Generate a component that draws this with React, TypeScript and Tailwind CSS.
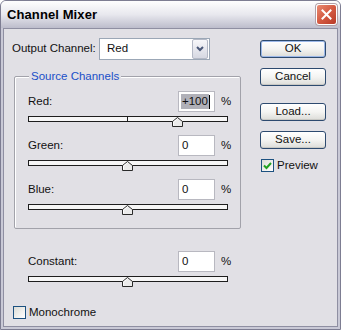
import React from "react";

const font = { fontFamily: '"Liberation Sans", Arial, sans-serif' };

function Thumb({ left }: { left: number }) {
  return (
    <svg
      className="absolute"
      style={{ left: left - 5, top: 0 }}
      width="11"
      height="10"
      viewBox="0 0 11 10"
    >
      <path d="M0.5 9.5 L0.5 4.5 L5.5 0.5 L10.5 4.5 L10.5 9.5 Z" fill="#ebebeb" stroke="#2a2a2a" strokeWidth="1" />
      <path d="M1.5 8.5 L1.5 5 L5.5 1.8" fill="none" stroke="#ffffff" strokeWidth="1" />
    </svg>
  );
}

function Slider({ pos, tick }: { pos: number; tick?: boolean }) {
  return (
    <div className="relative w-[200px] h-[10px]">
      <div className="absolute left-0 top-0 w-[200px] h-[6px] border border-[#1e1e1e] bg-[#f6f6f6]">
        {tick && <div className="absolute left-[98px] top-0 w-px h-[4px] bg-[#1e1e1e]" />}
      </div>
      <div className="absolute left-0 top-[1px] w-[200px] h-[10px]">
        <Thumb left={pos} />
      </div>
    </div>
  );
}

function ValueRow({
  label,
  value,
  pos,
  selected,
  tick,
}: {
  label: string;
  value: string;
  pos: number;
  selected?: boolean;
  tick?: boolean;
}) {
  return (
    <div className="flex flex-col">
      <div className="flex items-center h-[21px]">
        <div className="w-[163px] pl-[13px] text-[11.5px] text-[#111]">{label}</div>
        <div className="w-[37px] h-[21px] bg-white border border-[#b8b8c0] flex items-center pl-[2px] text-[11.5px] text-[#111]">
          {selected ? (
            <>
              <span className="bg-[#b0b0b8] px-[1px] leading-[15px]">{value}</span>
              <span className="w-px h-[14px] bg-black" />
            </>
          ) : (
            <span className="pl-[1px]">{value}</span>
          )}
        </div>
        <div className="pl-[6px] text-[11.5px] text-[#111]">%</div>
      </div>
      <div className="mt-[4px] pl-[13px]">
        <Slider pos={pos} tick={tick} />
      </div>
    </div>
  );
}

function XPButton({ label, def }: { label: string; def?: boolean }) {
  return (
    <div
      className={
        "w-[66px] h-[18px] rounded-[3px] border border-[#2d4a6f] flex items-center justify-center text-[11.5px] text-[#111] bg-gradient-to-b from-[#ffffff] via-[#f4f4f2] to-[#dcdcd8] " +
        (def ? "shadow-[inset_0_0_0_1px_#9cb8e8]" : "shadow-[inset_0_-1px_0_#c8c8c4]")
      }
    >
      {label}
    </div>
  );
}

export default function App() {
  return (
    <div className="w-[341px] h-[330px] bg-white" style={font}>
      <div className="w-[341px] h-[330px] rounded-t-[6px] border border-[#7d7d92] bg-[#c9c9d6] flex flex-col">
        {/* Title bar */}
        <div className="h-[27px] rounded-t-[5px] bg-gradient-to-b from-[#fefefe] via-[#e8e8ee] to-[#bdbdcc] flex items-center justify-between pl-[6px] pr-[3px]">
          <span className="text-[13px] font-bold text-black tracking-[0.1px]">Channel Mixer</span>
          <div className="w-[21px] h-[21px] rounded-[3px] border border-white bg-gradient-to-br from-[#e88a72] via-[#d45a42] to-[#b83a28] flex items-center justify-center shadow-[0_0_0_1px_#b0a0a8]">
            <svg width="11" height="11" viewBox="0 0 11 11">
              <path d="M1.5 1.5 L9.5 9.5 M9.5 1.5 L1.5 9.5" stroke="white" strokeWidth="2" strokeLinecap="square" />
            </svg>
          </div>
        </div>
        {/* Client area */}
        <div className="flex-1 mx-[2px] mb-[2px] border border-[#8f8fa2] bg-[#e1e0e5] flex">
          {/* Left column */}
          <div className="w-[255px] flex flex-col">
            <div className="mt-[9px] flex items-center h-[22px]">
              <div className="w-[95px] pl-[8px] text-[11.5px] text-[#111]">Output Channel:</div>
              <div className="w-[111px] h-[22px] bg-white border border-[#9ba7b6] flex items-center justify-between">
                <span className="pl-[7px] text-[11.5px] text-[#111]">Red</span>
                <div className="w-[16px] h-[20px] mr-[1px] rounded-[2px] border border-[#b4b9c6] bg-gradient-to-b from-[#f7f7fa] to-[#d6d8e2] flex items-center justify-center">
                  <svg width="8" height="6" viewBox="0 0 8 6">
                    <path d="M1 1 L4 4 L7 1" fill="none" stroke="#4a5878" strokeWidth="2" />
                  </svg>
                </div>
              </div>
            </div>
            {/* Group box */}
            <div className="relative mt-[16px] ml-[10px] w-[227px] h-[153px] rounded-[2px] border border-[#a2a2aa] shadow-[inset_1px_1px_0_#ffffff] pt-[14px] flex flex-col gap-[9px]">
              <div className="absolute left-[14px] top-[-8px] px-[2px] bg-[#e1e0e5] text-[11.5px] text-[#1a4fc8] leading-[14px]">
                Source Channels
              </div>
              <ValueRow label="Red:" value="+100" pos={149} selected tick />
              <ValueRow label="Green:" value="0" pos={99} />
              <ValueRow label="Blue:" value="0" pos={99} />
            </div>
            <div className="mt-[22px] ml-[11px]">
              <ValueRow label="Constant:" value="0" pos={99} />
            </div>
            <div className="mt-[18px] ml-[9px] flex items-center">
              <div className="w-[13px] h-[13px] border border-[#1c5180] bg-gradient-to-br from-[#dcdcd6] to-[#ffffff]" />
              <span className="pl-[3px] text-[11.5px] text-[#111]">Monochrome</span>
            </div>
          </div>
          {/* Right column */}
          <div className="pl-[1px] pt-[11px] flex flex-col">
            <XPButton label="OK" def />
            <div className="h-[10px]" />
            <XPButton label="Cancel" />
            <div className="h-[17px]" />
            <XPButton label="Load..." />
            <div className="h-[10px]" />
            <XPButton label="Save..." />
            <div className="mt-[8px] ml-[1px] flex items-center">
              <div className="w-[13px] h-[13px] border border-[#1c5180] bg-gradient-to-br from-[#dcdcd6] to-[#ffffff] flex items-center justify-center">
                <svg width="9" height="9" viewBox="0 0 9 9">
                  <path d="M1 4.5 L3.5 7 L8 2" fill="none" stroke="#21a121" strokeWidth="2" />
                </svg>
              </div>
              <span className="pl-[3px] text-[11.5px] text-[#111]">Preview</span>
            </div>
          </div>
        </div>
      </div>
    </div>
  );
}
